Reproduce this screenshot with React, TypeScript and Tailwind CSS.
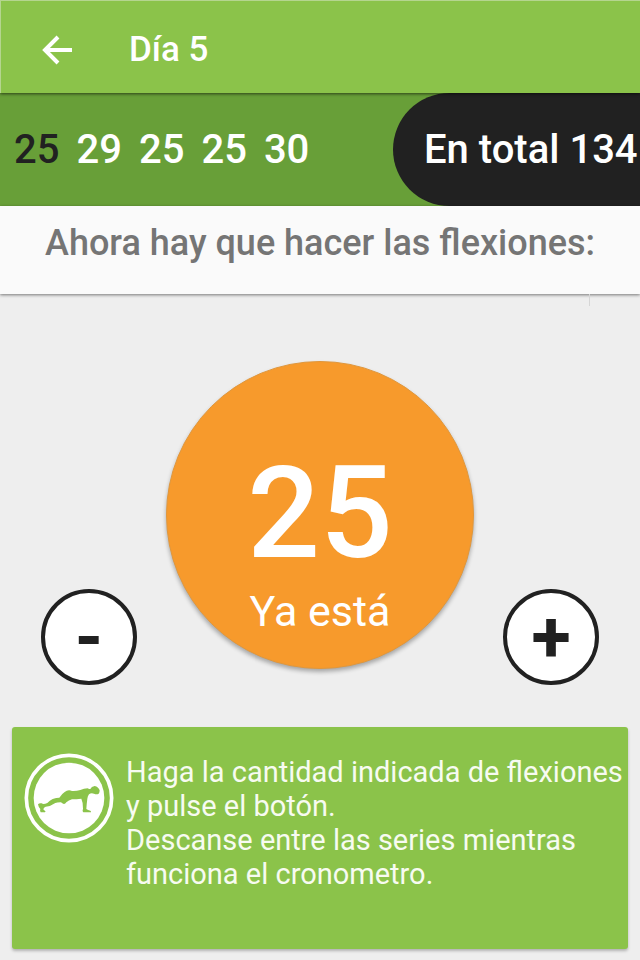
import { useState } from 'react'

const series = [25, 29, 25, 25, 30]

const BackIcon = () => (
  <svg
    width="32"
    height="32"
    viewBox="0 0 32 32"
    fill="none"
    stroke="currentColor"
    strokeWidth="4"
    aria-hidden="true"
  >
    <path d="M31 16H5M17 3L4 16l13 13" />
  </svg>
)

const PushUpIcon = () => (
  <svg
    className="size-[90px] shrink-0"
    viewBox="0 0 270 270"
    role="img"
    aria-label="Flexiones"
  >
    <circle cx="135" cy="135" r="128" fill="none" stroke="#fff" strokeWidth="11" />
    <circle cx="135" cy="135" r="106" fill="#fff" />
    <path
      fill="#8bc34a"
      d="M42 154Q46 149 53 151Q58 156 70 150Q77 143 86 138Q97 134 106 134Q113 123 122 117Q132 109 144 114Q156 115 169 111Q180 106 191 106Q194 109 199 108Q202 100 212 99Q223 101 227 112Q227 119 224 122Q218 126 210 122Q201 119 195 124Q191 129 190 137Q188 152 187 168Q192 172 199 173Q202 175 201 178L178 178Q174 174 177 167Q178 150 172 137Q157 139 144 139Q134 142 127 148Q122 156 115 151Q111 147 109 148Q99 148 94 150Q80 160 65 161Q59 163 58 169Q60 173 64 174Q65 177 63 178L50 178Q47 174 49 168Q43 162 42 154Z"
    />
  </svg>
)

const Header = () => (
  <header className="relative z-10 flex h-[93px] items-center border-t border-l border-[#b5d58f] bg-[#8bc34a] px-10 text-white shadow-[0_1px_3px_rgba(0,0,0,0.6)]">
    <button type="button" aria-label="Atrás" className="mt-1.5">
      <BackIcon />
    </button>
    <h1 className="mt-1.5 ml-14 text-[35px] leading-10 font-medium">Día 5</h1>
  </header>
)

const SeriesBar = ({ current }: { current: number }) => (
  <section className="flex h-[113px] items-center justify-between overflow-hidden bg-[#689f38] text-[40px] font-medium whitespace-nowrap text-white">
    <ol className="flex gap-[17px] pl-3.5">
      {series.map((e, i) => (
        <li key={i} className={i === current ? 'text-[#212121]' : ''}>
          {e}
        </li>
      ))}
    </ol>
    <p className="flex h-full w-[247px] items-center rounded-l-full bg-[#212121] pl-[31px]">
      En total {series.reduce((a, b) => a + b, 0)}
    </p>
  </section>
)

const roundButton =
  'flex size-24 shrink-0 items-center justify-center rounded-full border-4 border-[#212121] bg-white pt-0.5 text-[72px] leading-none font-bold text-[#212121]'

export default function App() {
  const [count, setCount] = useState(series[0])

  return (
    <div className="flex min-h-screen flex-col bg-[#eeeeee] font-['Roboto','Liberation_Sans',sans-serif]">
      <Header />
      <SeriesBar current={0} />
      <h2 className="relative h-[88px] bg-[#fafafa] pt-3 text-center text-[36px] leading-[50px] font-medium text-[#757575] shadow-[0_1px_3px_rgba(0,0,0,0.5)]">
        Ahora hay que hacer las flexiones:
        <span className="absolute top-full right-[50px] h-3 w-px bg-[#d6d6d6]" />
      </h2>

      <main className="flex flex-1 flex-col pt-[67px]">
        <div className="flex items-end justify-center gap-[29px]">
          <button
            type="button"
            aria-label="Menos"
            className={roundButton}
            onClick={() => setCount(Math.max(0, count - 1))}
          >
            -
          </button>
          <button
            type="button"
            className="mb-4 flex size-[308px] shrink-0 flex-col items-center rounded-full border border-[#e0973c] bg-[#f79a2c] pt-[95px] text-white shadow-[0_3px_4px_rgba(0,0,0,0.3)]"
          >
            <span className="text-[128px] leading-[112px] font-medium">{count}</span>
            <span className="pt-4 text-[43px] leading-[52px]">Ya está</span>
          </button>
          <button
            type="button"
            aria-label="Más"
            className={roundButton}
            onClick={() => setCount(count + 1)}
          >
            +
          </button>
        </div>

        <section className="mx-3 mt-[42px] mb-[11px] flex flex-1 gap-3 rounded-[3px] bg-[#8bc34a] pt-[26px] pl-3 text-white shadow-[0_2px_3px_rgba(0,0,0,0.25)]">
          <PushUpIcon />
          <p className="pt-0.5 text-[29px] leading-[34px] text-[#f7fbf1]">
            Haga la cantidad indicada de flexiones
            <br />
            y pulse el botón.
            <br />
            Descanse entre las series mientras
            <br />
            funciona el cronometro.
          </p>
        </section>
      </main>
    </div>
  )
}
